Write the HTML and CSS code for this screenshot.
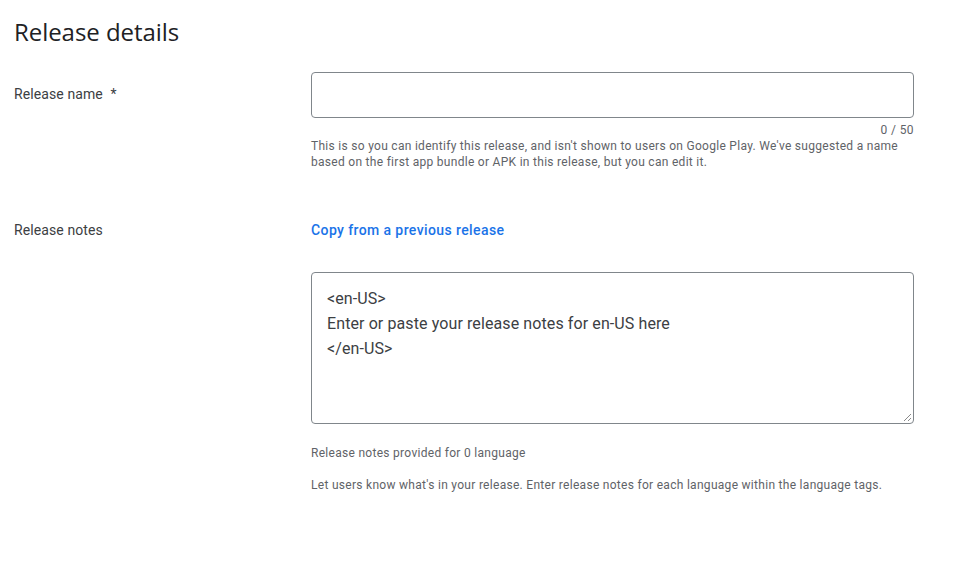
FILE: index.html
```html
<!DOCTYPE html>
<html>
<head>
<meta charset="utf-8">
<link rel="stylesheet" href="styles.css">
</head>
<body>
<div class="page">
  <h1 class="title">Release details</h1>
  <div class="row row-name">
    <div class="label">Release name <span class="req">*</span></div>
    <div class="field">
      <div class="input"></div>
      <div class="counter">0 / 50</div>
      <div class="help">This is so you can identify this release, and isn't shown to users on Google Play. We've suggested a name based on the first app bundle or APK in this release, but you can edit it.</div>
    </div>
  </div>
  <div class="row row-notes">
    <div class="label">Release notes</div>
    <div class="field">
      <a class="link">Copy from a previous release</a>
      <div class="textarea">
        <div>&lt;en-US&gt;</div>
        <div>Enter or paste your release notes for en-US here</div>
        <div>&lt;/en-US&gt;</div>
        <svg class="grip" width="9" height="9" viewBox="0 0 9 9"><path d="M8 1 L1 8 M8 5 L5 8" stroke="#8a8a8a" stroke-width="1" fill="none"/></svg>
      </div>
      <div class="help provided">Release notes provided for 0 language</div>
      <div class="help">Let users know what's in your release. Enter release notes for each language within the language tags.</div>
    </div>
  </div>
</div>
</body>
</html>
```
FILE: styles.css
```css
html, body { margin: 0; padding: 0; background: #fff; }
body { font-family: Roboto, "Noto Sans", sans-serif; color: #3c4043; }
.page { padding: 17px 14px 0 14px; width: 900px; }
.title { margin: 0; font-family: "Open Sans", Roboto, sans-serif; font-weight: 500; font-size: 24px; line-height: 30px; color: #202124; letter-spacing: -0.05px; }
.row { display: grid; grid-template-columns: 297px 603px; }
.row-name { margin-top: 25px; }
.label { font-size: 14px; line-height: 20px; color: #3c4043; letter-spacing: 0.1px; }
.row-name .label { padding-top: 12px; }
.req { margin-left: 4px; }
.input { height: 44px; border: 1px solid #80868b; border-radius: 4px; }
.counter { text-align: right; font-size: 12px; line-height: 16px; color: #5f6368; margin-top: 4px; letter-spacing: 0.4px; }
.help { font-size: 12px; line-height: 16px; color: #5f6368; letter-spacing: 0.29px; }
.row-notes { margin-top: 50px; }
.link { display: block; font-size: 14px; line-height: 20px; font-weight: 500; color: #1a73e8; letter-spacing: 0.4px; }
.textarea { position: relative; margin-top: 32px; height: 150px; border: 1px solid #80868b; border-radius: 4px; padding: 0; font-size: 16px; line-height: 25px; color: #3c4043; letter-spacing: 0.1px; }
.textarea > div:first-child { margin-top: 13px; }
.textarea > div { padding-left: 15px; }
.grip { position: absolute; right: 1px; bottom: 1px; }
.provided { margin-top: 21px; }
.provided + .help { margin-top: 16px; }
```
